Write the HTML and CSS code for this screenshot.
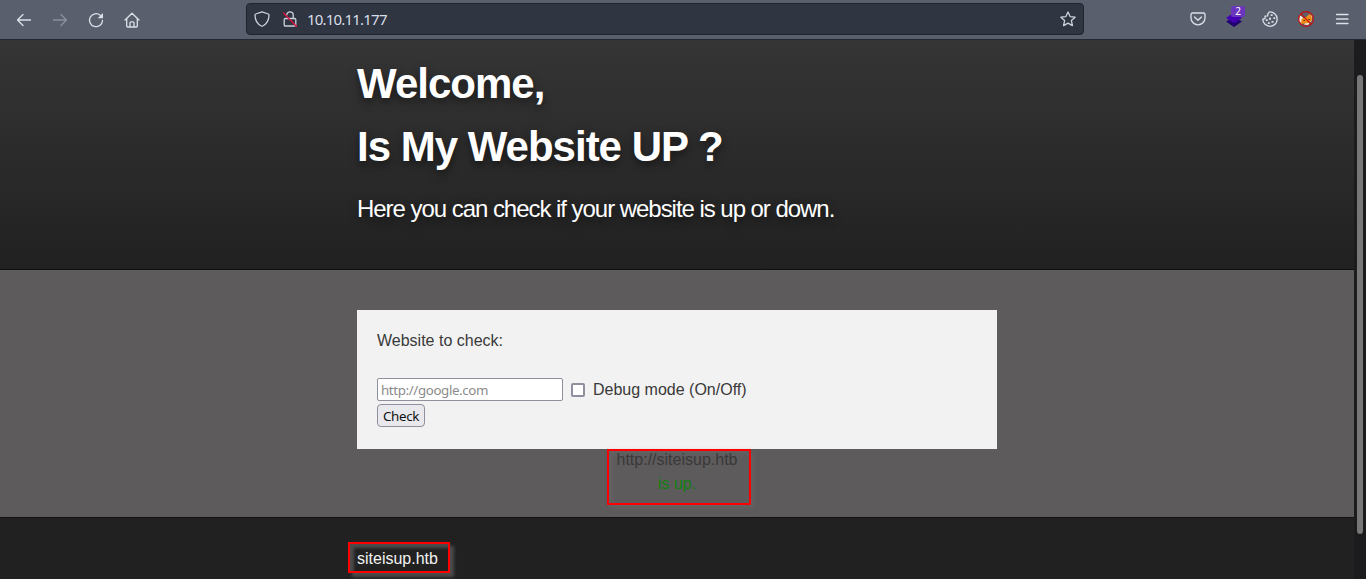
FILE: index.html
```html
<!DOCTYPE html>
<html lang="en">
<head>
<meta charset="utf-8">
<title>Is my Website up ?</title>
<link rel="stylesheet" href="styles.css">
</head>
<body>
<div class="window">
  <nav class="toolbar">
    <div class="nav-buttons">
      <svg class="icon" viewBox="0 0 16 16"><path d="M14.500 8H1.500M7 2.500 1.500 8 7 13.500"/></svg>
      <svg class="icon dim" viewBox="0 0 16 16"><path d="M1.500 8h13M9 2.500 14.500 8 9 13.500"/></svg>
      <svg class="icon" viewBox="0 0 16 16"><path d="M14.500 8.500a6.500 6.500 0 1 1-2.200-5.200"/><path class="solid" d="M15 1v5.300H9.700z"/></svg>
      <svg class="icon" viewBox="0 0 16 16"><path d="M1 8 8 1.300 15 8M2.700 6.500V14q0 1 1 1h8.600q1 0 1-1V6.500M6 15v-4.200q0-1 1-1h2q1 0 1 1V15"/></svg>
    </div>
    <div class="urlbar">
      <svg class="icon" viewBox="0 0 16 16"><path d="M8 .8 14.300 3q.7.200.7 1c0 5.200-2.300 8.900-6.300 11q-.7.400-1.400 0C3.300 12.900 1 9.200 1 4q0-.8.700-1z"/></svg>
      <svg class="icon lock" viewBox="0 0 16 16"><path d="M4.800 4V3.800a3.200 3 0 0 1 6.400 0V7M3.500 7.500h9q1.300 0 1.300 1.300v4.900q0 1.300-1.300 1.300h-9q-1.300 0-1.300-1.300V8.800q0-1.300 1.300-1.300z"/><path class="slash" d="m1.500 2 13 13.500"/></svg>
      <span class="address">10.10.11.177</span>
      <svg class="icon star" viewBox="0 0 16 16"><path d="m8 1 2.100 4.600 5 .6-3.700 3.400 1 5L8 12.100l-4.400 2.500 1-5L.9 6.200l5-.6z"/></svg>
    </div>
    <div class="extensions">
      <svg class="icon pocket" viewBox="0 0 16 16"><path d="M2.500 2h11q1.500 0 1.500 1.500V7A7 6.800 0 0 1 1 7V3.500Q1 2 2.500 2zM4.500 6 8 9.300 11.500 6"/></svg>
      <div class="layers">
        <svg viewBox="0 0 16 16"><path fill="#23006f" d="M0 10.500 8 6l8 4.500L8 16z"/><path fill="#4500b4" d="M0 7 8 1.500 16 7l-8 5z"/></svg>
        <span class="badge">2</span>
      </div>
      <svg class="icon" viewBox="0 0 16 16"><path d="M7.500.900A7.200 7.200 0 1 1 .8 8.200L3 7.600V5.200l2.700-.4L6 2.500z"/><path class="solid" d="M8.700 3.200h1.900v1.900H8.700zM11.400 6.200h1.800V8h-1.800zM3.800 8.200h1.900v1.900H3.800zM7 6.700h2v2H7zM5.900 11.300h1.800v1.800H5.900zM9.500 9.900h1.900v1.900H9.500z"/></svg>
      <svg class="fox" viewBox="0 0 16 16"><path fill="#f5edde" d="M1.300 3.800 5 6.500l-1 6-2.700-2zM12 3.500l2.500 1.500-1 5L10 14l-4-.5z"/><path fill="#ee8a16" d="m3.500 8 4.500-2 3.500-3 2 1.500.5 4.500-3 3-5 .5L3 13z"/><path fill="#613516" d="M5.500 9H7v1H5.500zM10.500 8H12v1h-1.500z"/><circle cx="8" cy="8" r="7.400"/><path class="ban" d="m3 3 10 10"/></svg>
      <svg class="icon menu" viewBox="0 0 16 16"><path d="M2.500 3.500h11.500M2.500 8h11.500M2.500 12.500h11.500"/></svg>
    </div>
  </nav>
  <div class="viewport">
    <main class="page">
      <header class="hero">
        <div class="inner">
          <h1>Welcome,</h1>
          <h1>Is My Website UP ?</h1>
          <h2>Here you can check if your website is up or down.</h2>
        </div>
      </header>
      <section class="content">
        <div class="inner">
          <form class="checker">
            <label class="prompt">Website to check:</label>
            <div class="row">
              <input class="site" type="text" placeholder="http://google.com">
              <input class="debug" type="checkbox" id="debug">
              <label class="debug-label" for="debug">Debug mode (On/Off)</label>
            </div>
            <button class="submit" type="button">Check</button>
          </form>
          <div class="result"><span>http://siteisup.htb</span><span class="up">is up.</span></div>
        </div>
      </section>
      <footer class="footer"><div class="inner"><span class="host">siteisup.htb</span></div></footer>
    </main>
    <div class="scrollbar"><div class="thumb"></div></div>
  </div>
</div>
</body>
</html>
```
FILE: styles.css
```css
* { box-sizing: border-box; }
body { margin: 0; font: 16px/24px "Liberation Sans", Arial, sans-serif; color: #393939; background: #212121; }
.window { height: 579px; display: flex; flex-direction: column; overflow: hidden; }
.toolbar { height: 40px; flex: none; background: #595f6d; border-bottom: 1px solid #242832; display: grid; grid-template-columns: 246px 838px 1fr; }
.icon { width: 16px; height: 16px; fill: none; stroke: #dce0e8; stroke-width: 1.3; stroke-linecap: round; stroke-linejoin: round; flex: none; }
.icon .solid { fill: #dce0e8; stroke: none; }
.icon.dim { stroke: #8c919c; }
.nav-buttons { display: flex; gap: 20px; padding: 11.500px 0 0 16px; }
.urlbar { margin-top: 3px; height: 32px; background: #2f3541; border: 1px solid #20242c; border-radius: 4px; display: flex; align-items: center; padding: 0 7px; }
.urlbar .icon { stroke: #ccd1da; }
.urlbar .lock { margin: 0 9px 0 12px; }
.urlbar .lock .slash { stroke: #e4113f; }
.address { flex: 1; font: 15px/20px "Noto Sans", sans-serif; letter-spacing: -0.8px; color: #d8dee9; }
.extensions { display: flex; gap: 20px; padding: 11px 0 0 106px; }
.layers { position: relative; width: 16px; height: 16px; }
.layers svg { width: 16px; height: 16px; display: block; }
.badge { position: absolute; left: 5px; top: -5px; width: 14px; height: 11px; background: #6b36bd; border-radius: 2px; color: #fff; font: 10px/11px "Noto Sans", sans-serif; text-align: center; }
.fox { width: 16px; height: 16px; }
.fox circle, .fox .ban { fill: none; stroke: #c90d0d; stroke-width: 1.1; }
.viewport { flex: 1; display: flex; min-height: 0; }
.page { flex: 1; display: flex; flex-direction: column; }
.inner { width: 640px; margin: 0 auto; }
.hero { height: 230px; padding-top: 12px; background: linear-gradient(#353535, #212121); border-bottom: 1px solid #111; color: #fff; text-shadow: 0 4px 8px rgba(0,0,0,.5); }
.hero h1 { margin: 0; font-size: 42px; line-height: 63px; letter-spacing: -1px; }
.hero h2 { margin: 13px 0 0; font-size: 24px; line-height: 36px; font-weight: 400; letter-spacing: -1.040px; }
.content { height: 247px; padding-top: 40px; background: #5e5b5c; }
.checker { height: 139px; padding: 19px 20px 0; background: #f2f2f2; display: flex; flex-direction: column; align-items: flex-start; }
.row { height: 25px; margin-top: 24px; display: flex; align-items: flex-start; }
.site { width: 186px; height: 23px; margin: 1px 0 0; padding: 2px 3px 1px; border: 1px solid #8f8f9d; border-radius: 2px; background: #fff; font: 13.333px/19px "Noto Sans", sans-serif; letter-spacing: -0.380px; }
.site::placeholder { color: #8b8b8b; opacity: 1; }
.debug { appearance: none; width: 14px; height: 14px; margin: 6px 8px 0; border: 2px solid #8f8f9d; border-radius: 2px; background: #fff; }
.debug-label { padding-top: 1px; }
.submit { width: 48px; height: 23px; margin-top: 2px; padding: 0; border: 1px solid #8f8f9d; border-radius: 4px; background: #e9e9ed; color: #111; font: 13.333px/20px "Noto Sans", sans-serif; letter-spacing: -0.300px; }
.result { width: 144px; height: 56px; margin-left: 250px; border: 2px solid #f00; display: flex; flex-direction: column; align-items: center; padding-right: 4px; line-height: 24px; box-shadow: 3px 3px 4px #656263, inset 3px 3px 4px #656263; }
.result span { position: relative; top: -3px; }
.result .up { color: #118011; }
.footer { flex: 1; background: #212121; border-top: 1px solid #111; color: #f2f2f2; padding-top: 24px; }
.host { display: block; width: 102px; height: 31px; margin-left: -9px; border: 2px solid #f00; padding: 3px 0 0 7px; line-height: 24px; box-shadow: 4px 4px 3px #4b4b4b, inset 4px 4px 3px #4b4b4b; }
.scrollbar { width: 12px; background: #1c1c1f; padding: 35px 3px 0; }
.thumb { width: 6px; height: 459px; border-radius: 3px; background: #777; }
```
